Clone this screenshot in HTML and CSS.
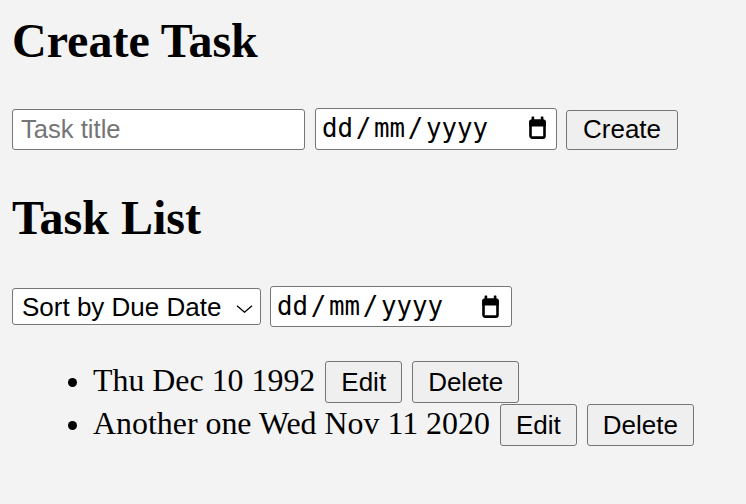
FILE: index.html
```html
<!DOCTYPE html>
<html lang="en">
<head>
<meta charset="utf-8">
<title>Tasks</title>
<link rel="stylesheet" href="styles.css">
</head>
<body>
<main class="page">
  <h1 class="heading heading-first">Create Task</h1>
  <form class="row row-create">
    <input class="text-input" type="text" placeholder="Task title">
    <div class="date-field date-create" role="textbox" aria-label="Due date">
      <span class="date-text">dd<span class="sep">/</span>mm<span class="sep">/</span>yyyy</span>
      <svg class="cal-icon" viewBox="0 0 19 24" width="19" height="24" aria-hidden="true">
        <rect x="3.6" y="0.4" width="2.6" height="4.4" rx="0.6" fill="#000"/>
        <rect x="12.8" y="0.4" width="2.6" height="4.4" rx="0.6" fill="#000"/>
        <path d="M3.6 3.4h11.8a2.4 2.4 0 0 1 2.4 2.4v4.6H1.2V5.8a2.4 2.4 0 0 1 2.4-2.4z" fill="#000"/>
        <rect x="2.5" y="4.7" width="14" height="16.9" rx="1.6" fill="none" stroke="#000" stroke-width="2.6"/>
      </svg>
    </div>
    <button class="btn btn-create" type="button">Create</button>
  </form>

  <h1 class="heading heading-second">Task List</h1>
  <div class="row row-filter">
    <select class="sort-select">
      <option>Sort by Due Date</option>
    </select>
    <div class="date-field date-filter" role="textbox" aria-label="Filter date">
      <span class="date-text">dd<span class="sep">/</span>mm<span class="sep">/</span>yyyy</span>
      <svg class="cal-icon" viewBox="0 0 19 24" width="19" height="24" aria-hidden="true">
        <rect x="3.6" y="0.4" width="2.6" height="4.4" rx="0.6" fill="#000"/>
        <rect x="12.8" y="0.4" width="2.6" height="4.4" rx="0.6" fill="#000"/>
        <path d="M3.6 3.4h11.8a2.4 2.4 0 0 1 2.4 2.4v4.6H1.2V5.8a2.4 2.4 0 0 1 2.4-2.4z" fill="#000"/>
        <rect x="2.5" y="4.7" width="14" height="16.9" rx="1.6" fill="none" stroke="#000" stroke-width="2.6"/>
      </svg>
    </div>
  </div>

  <ul class="task-list">
    <li class="task">Thu Dec 10 1992<button class="btn btn-small" type="button">Edit</button><button class="btn btn-small" type="button">Delete</button></li>
    <li class="task">Another one Wed Nov 11 2020<button class="btn btn-small" type="button">Edit</button><button class="btn btn-small" type="button">Delete</button></li>
  </ul>
</main>
</body>
</html>
```

FILE: styles.css
```css
html, body {
  margin: 0;
  padding: 0;
  background: #f3f3f3;
}

body {
  font-family: "Liberation Serif", "Times New Roman", serif;
  color: #000;
}

.page {
  padding: 0 12px;
}

.heading {
  font-family: "Liberation Serif", "Times New Roman", serif;
  font-weight: bold;
  font-size: 48px;
  line-height: 54px;
  margin: 0;
}

.heading-first {
  margin-top: 14px;
}

.heading-second {
  margin-top: 41px;
}

.row {
  display: flex;
  margin: 0;
}

.row-create {
  margin-top: 40px;
  align-items: flex-end;
  height: 42px;
}

.row-filter {
  margin-top: 41px;
  align-items: center;
  height: 41px;
}

.text-input {
  box-sizing: border-box;
  width: 293px;
  height: 41px;
  margin: 0 10px 0 0;
  padding: 0 8px;
  border: 1px solid #767676;
  border-radius: 3px;
  background: #fff;
  font-family: "Liberation Sans", Arial, sans-serif;
  font-size: 25.6px;
  color: #000;
}

.text-input::placeholder {
  color: #757575;
}

.date-field {
  box-sizing: border-box;
  width: 242px;
  display: flex;
  align-items: center;
  justify-content: space-between;
  padding: 0 9px 0 6px;
  border: 1px solid #767676;
  border-radius: 3px;
  background: #fff;
}

.date-create {
  height: 42px;
  margin-right: 9px;
}

.date-filter {
  height: 41px;
  padding-right: 11px;
}

.date-text {
  font-family: "DejaVu Sans Mono", "Liberation Mono", monospace;
  font-size: 25.8px;
  line-height: 1;
  white-space: nowrap;
}

.sep {
  margin: 0 2.7px;
}

.cal-icon {
  display: block;
  flex: none;
}

.date-create .cal-icon {
  margin-top: -2px;
}

.btn {
  box-sizing: border-box;
  font-family: "Liberation Sans", Arial, sans-serif;
  font-size: 26px;
  color: #000;
  background: #efefef;
  border: 1px solid #767676;
  border-radius: 3px;
  padding: 0 15px;
  margin: 0;
}

.btn-create {
  height: 40px;
  width: 112px;
  padding: 0 16px 2px;
}

.sort-select {
  box-sizing: border-box;
  width: 249px;
  height: 37px;
  margin: 0 9px 0 0;
  padding: 0 30px 0 9px;
  border: 1px solid #767676;
  border-radius: 3px;
  background-color: #fff;
  background-image: url("data:image/svg+xml,%3Csvg xmlns='http://www.w3.org/2000/svg' width='17' height='8' viewBox='0 0 17 8'%3E%3Cpath d='M1 0.8l7.5 6.4 7.5-6.4' fill='none' stroke='%23000' stroke-width='1.3'/%3E%3C/svg%3E");
  background-repeat: no-repeat;
  background-position: 223px 16px;
  -webkit-appearance: none;
  appearance: none;
  font-family: "Liberation Sans", Arial, sans-serif;
  font-size: 26px;
  color: #000;
}

.task-list {
  margin: 34px 0 0;
  padding: 0 0 0 81px;
  font-size: 31.9px;
  list-style: disc;
}

.task {
  margin-bottom: 1px;
}

.btn-small {
  height: 42px;
  margin-left: 10px;
  vertical-align: baseline;
}
```
